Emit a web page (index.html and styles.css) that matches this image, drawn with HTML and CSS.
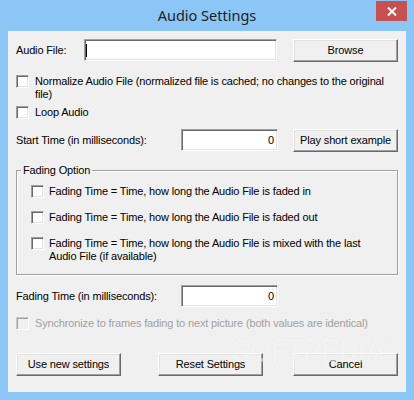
FILE: index.html
```html
<!DOCTYPE html>
<html>
<head>
<meta charset="utf-8">
<link rel="stylesheet" href="styles.css">
</head>
<body>
<div class="window">
  <div class="titlebar">
    <span class="title">Audio Settings</span>
    <span class="close"><svg width="10" height="9" viewBox="0 0 10 9"><path d="M1 0.5 L9 8.5 M9 0.5 L1 8.5" stroke="#fff" stroke-width="2" fill="none"/></svg></span>
  </div>
  <div class="client">
    <div class="row row-file">
      <span class="lbl lbl-file">Audio File:</span>
      <div class="edit edit-file"><span class="caret"></span></div>
      <div class="btn btn-browse">Browse</div>
    </div>
    <div class="check check-normalize">
      <span class="box"></span>
      <span class="ctext">Normalize Audio File (normalized file is cached; no changes to the original<br>file)</span>
    </div>
    <div class="check check-loop">
      <span class="box"></span>
      <span class="ctext">Loop Audio</span>
    </div>
    <div class="row row-start">
      <span class="lbl lbl-time">Start Time (in milliseconds):</span>
      <div class="edit edit-num">0</div>
      <div class="btn btn-play">Play short example</div>
    </div>
    <fieldset class="group">
      <legend class="legend">Fading Option</legend>
      <div class="check gcheck">
        <span class="box"></span>
        <span class="ctext">Fading Time = Time, how long the Audio File is faded in</span>
      </div>
      <div class="check gcheck gnext">
        <span class="box"></span>
        <span class="ctext">Fading Time = Time, how long the Audio File is faded out</span>
      </div>
      <div class="check gcheck gnext">
        <span class="box"></span>
        <span class="ctext">Fading Time = Time, how long the Audio File is mixed with the last<br>Audio File (if available)</span>
      </div>
    </fieldset>
    <div class="row row-fade">
      <span class="lbl lbl-time">Fading Time (in milliseconds):</span>
      <div class="edit edit-num">0</div>
    </div>
    <div class="check check-sync disabled">
      <span class="box"></span>
      <span class="ctext">Synchronize to frames fading to next picture (both values are identical)</span>
    </div>
    <div class="row row-buttons">
      <div class="btn">Use new settings</div>
      <div class="btn btn-reset">Reset Settings</div>
      <div class="btn btn-cancel">Cancel</div>
    </div>
    <div class="watermark">SOFTPEDIA<sup>®</sup></div>
  </div>
</div>
</body>
</html>
```

FILE: styles.css
```css
html, body {
  margin: 0;
  padding: 0;
  background: #8cc6f6;
}

.window {
  width: 414px;
  height: 400px;
  background: #8cc6f6;
  box-sizing: border-box;
  display: flex;
  flex-direction: column;
}

.titlebar {
  height: 31px;
  display: grid;
  grid-template-columns: 1fr auto 1fr;
  flex: none;
}

.title {
  grid-column: 2;
  align-self: center;
  font-family: "Noto Sans", sans-serif;
  font-size: 14.5px;
  color: #222;
  line-height: 20px;
  margin-top: -1px;
}

.close {
  grid-column: 3;
  justify-self: end;
  align-self: start;
  margin-top: 1px;
  margin-right: 7px;
  width: 31px;
  height: 20px;
  background: #c75050;
  display: flex;
  align-items: center;
  justify-content: center;
}

.close svg {
  display: block;
}

.client {
  position: relative;
  margin: 0 8px;
  height: 361px;
  background: #f0f0f0;
  box-sizing: border-box;
  padding: 8px 8px 0 8px;
  display: flex;
  flex-direction: column;
  font-family: "Liberation Sans", Arial, sans-serif;
  font-size: 11px;
  letter-spacing: -0.15px;
  color: #000;
}

.row {
  display: flex;
  align-items: flex-start;
  flex: none;
}

.lbl {
  align-self: center;
  white-space: nowrap;
  line-height: 13px;
}

.lbl-file {
  width: 68px;
  flex: none;
}

.lbl-time {
  width: 165px;
  flex: none;
}

.edit {
  box-sizing: border-box;
  height: 22px;
  background: #fff;
  border-style: solid;
  border-width: 1px;
  border-color: #a0a0a0 #fff #fff #a0a0a0;
  box-shadow: inset 1px 1px 0 #696969, inset -1px -1px 0 #e3e3e3;
  flex: none;
  display: flex;
  align-items: center;
}

.edit-file {
  width: 193px;
  margin-right: 16px;
  padding-left: 1px;
}

.caret {
  width: 1px;
  height: 13px;
  background: #000;
}

.edit-num {
  width: 97px;
  justify-content: flex-end;
  padding-right: 3px;
  line-height: 13px;
}

.btn {
  box-sizing: border-box;
  width: 105px;
  height: 23px;
  background: #f0f0f0;
  border-style: solid;
  border-width: 1px;
  border-color: #fff #696969 #696969 #fff;
  box-shadow: inset -1px -1px 0 #a0a0a0, inset 1px 1px 0 #e3e3e3;
  display: flex;
  align-items: center;
  justify-content: center;
  white-space: nowrap;
  line-height: 13px;
  flex: none;
}

.row-start .edit-num {
  margin-right: 15px;
}

.check {
  display: flex;
  align-items: flex-start;
  line-height: 13px;
  flex: none;
}

.box {
  width: 13px;
  height: 13px;
  box-sizing: border-box;
  flex: none;
  background: #fff;
  border-style: solid;
  border-width: 1px;
  border-color: #a0a0a0 #fff #fff #a0a0a0;
  box-shadow: inset 1px 1px 0 #696969, inset -1px -1px 0 #e3e3e3;
  margin-right: 6px;
}

.ctext {
  white-space: nowrap;
}

.check-normalize {
  margin-top: 13px;
}

.check-loop {
  margin-top: 5px;
}

.row-start {
  margin-top: 10px;
}

.group {
  margin: 11px 0 0 0;
  width: 382px;
  box-sizing: border-box;
  padding: 8px 0 11px 4px;
  border: 1px solid #a0a0a0;
  box-shadow: inset 1px 1px 0 #fff, 1px 1px 0 #fff;
  min-width: 0;
  flex: none;
}

.legend {
  padding: 0 2px;
  line-height: 14px;
}

.gcheck {
  margin-left: 10px;
}

.gcheck .box {
  margin-right: 5px;
}

.gnext {
  margin-top: 13px;
}

.row-fade {
  margin-top: 10px;
}

.check-sync {
  margin-top: 10px;
}

.disabled {
  color: #a0a0a0;
}

.disabled .box {
  background: #f0f0f0;
  border-color: #c8c8c8 #fff #fff #c8c8c8;
  box-shadow: inset 1px 1px 0 #a0a0a0, inset -1px -1px 0 #f0f0f0;
}

.row-buttons {
  margin-top: 23px;
}

.btn-reset {
  margin-left: 37px;
}

.btn-cancel {
  margin-left: 30px;
}

.watermark {
  position: absolute;
  left: 224px;
  top: 304px;
  font-family: "Liberation Sans", Arial, sans-serif;
  font-weight: bold;
  font-size: 34px;
  letter-spacing: -1px;
  line-height: 30px;
  color: rgba(255, 255, 255, 0.5);
  text-shadow: 0 0 1px rgba(0, 0, 0, 0.05);
  transform: scaleX(0.82);
  transform-origin: left top;
  pointer-events: none;
}

.watermark sup {
  font-size: 12px;
  vertical-align: top;
  line-height: 12px;
}
```
